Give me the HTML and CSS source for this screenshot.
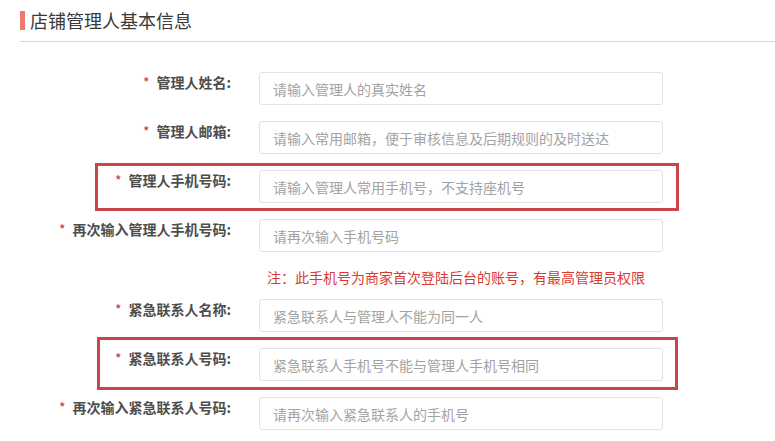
FILE: index.html
```html
<!DOCTYPE html>
<html lang="zh-CN">
<head>
    <meta charset="UTF-8">
    <meta name="viewport" content="width=device-width, initial-scale=1.0">
    <title>店铺管理人基本信息</title>
    <link rel="stylesheet" href="styles.css">
</head>
<body>
    <div class="section-title">
        <span class="title-bar"></span>
        <h2>店铺管理人基本信息</h2>
    </div>
    <form class="info-form">
        <div class="form-row">
            <label><span class="req">*</span>管理人姓名:</label>
            <input type="text" placeholder="请输入管理人的真实姓名">
        </div>
        <div class="form-row">
            <label><span class="req">*</span>管理人邮箱:</label>
            <input type="text" placeholder="请输入常用邮箱，便于审核信息及后期规则的及时送达">
        </div>
        <div class="form-row marked">
            <label><span class="req">*</span>管理人手机号码:</label>
            <input type="text" placeholder="请输入管理人常用手机号，不支持座机号">
        </div>
        <div class="form-row">
            <label><span class="req">*</span>再次输入管理人手机号码:</label>
            <input type="text" placeholder="请再次输入手机号码">
        </div>
        <p class="note">注：此手机号为商家首次登陆后台的账号，有最高管理员权限</p>
        <div class="form-row">
            <label><span class="req">*</span>紧急联系人名称:</label>
            <input type="text" placeholder="紧急联系人与管理人不能为同一人">
        </div>
        <div class="form-row marked second">
            <label><span class="req">*</span>紧急联系人号码:</label>
            <input type="text" placeholder="紧急联系人手机号不能与管理人手机号相同">
        </div>
        <div class="form-row">
            <label><span class="req">*</span>再次输入紧急联系人号码:</label>
            <input type="text" placeholder="请再次输入紧急联系人的手机号">
        </div>
    </form>
</body>
</html>
```

FILE: styles.css
```css
body {
    margin: 0;
    background-color: #fff;
    font-family: "Microsoft YaHei", "Noto Sans CJK SC", sans-serif;
    color: #555;
    overflow: hidden;
}
.section-title {
    display: flex;
    align-items: flex-start;
    gap: 5px;
    margin-left: 20px;
    padding-top: 9px;
    height: 42px;
    box-sizing: border-box;
    border-bottom: 1px solid #d6d6d6;
}
.title-bar {
    width: 5px;
    height: 19px;
    margin-top: 2px;
    background-color: #ec7a6d;
}
.section-title h2 {
    margin: 0;
    font-size: 18px;
    line-height: 22px;
    font-weight: normal;
    color: #3a3a3a;
}
.info-form {
    padding-top: 30px;
}
.form-row {
    position: relative;
    display: grid;
    grid-template-columns: 231px 404px;
    column-gap: 28px;
    align-items: start;
    margin-bottom: 16px;
}
.form-row label {
    text-align: right;
    font-size: 14px;
    line-height: 20px;
    font-weight: bold;
    color: #4d4d4d;
    white-space: nowrap;
}
.req {
    color: #c9302c;
    font-weight: normal;
    margin-right: 7px;
}
.form-row input {
    height: 33px;
    box-sizing: border-box;
    border: 1px solid #e2e2e2;
    border-radius: 3px;
    padding: 0 13px;
    font-family: inherit;
    font-size: 14px;
    color: #555;
    background-color: #fff;
    outline: none;
}
.form-row input::placeholder {
    color: #a3a3a3;
}
.marked::after {
    content: "";
    position: absolute;
    left: 95px;
    top: -7px;
    width: 578px;
    height: 42px;
    border: 3px solid #c8464a;
    pointer-events: none;
}
.marked.second::after {
    left: 97px;
    top: -11px;
    width: 575px;
    height: 47px;
}
.note {
    margin: -1px 0 12px 267px;
    font-size: 14px;
    line-height: 20px;
    color: #d93a32;
}
```
